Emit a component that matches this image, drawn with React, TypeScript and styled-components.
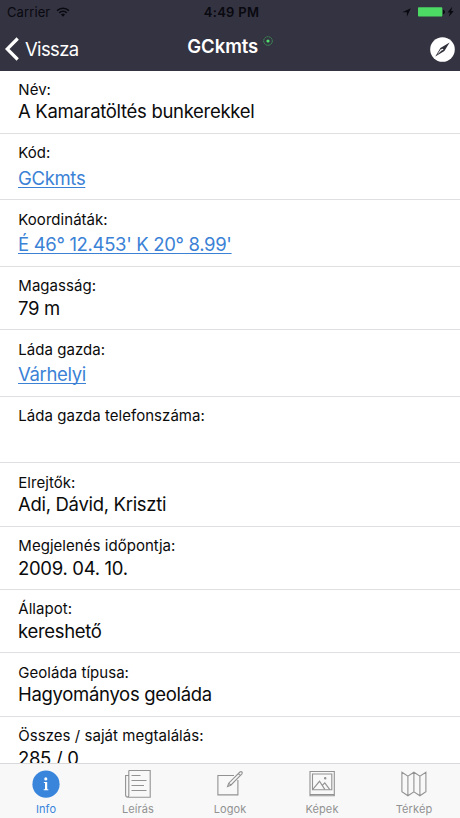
import React from 'react';
import styled, { createGlobalStyle } from 'styled-components';

const GlobalStyle = createGlobalStyle`
  * { box-sizing: border-box; }
  body { margin: 0; background: #fff; }
`;

const Screen = styled.div`
  width: 460px;
  height: 818px;
  display: flex;
  flex-direction: column;
  overflow: hidden;
  background: #fff;
  font-family: Inter, 'Liberation Sans', sans-serif;
  color: #0b0b0c;
`;

const Header = styled.header`
  flex: none;
  height: 71px;
  background: #343341;
`;

const StatusBar = styled.div`
  height: 24px;
  display: grid;
  grid-template-columns: 1fr auto 1fr;
  align-items: center;
  padding: 0 5px 0 7px;
  font-size: 13px;
  line-height: 24px;
  color: #090910;
`;

const Carrier = styled.div`
  display: flex;
  align-items: center;
  gap: 6px;
  letter-spacing: 0.1px;
`;

const Clock = styled.div`
  font-weight: 600;
  letter-spacing: 0.3px;
  padding-left: 1px;
`;

const Indicators = styled.div`
  display: flex;
  align-items: center;
  justify-content: flex-end;
`;

const NavBar = styled.div`
  height: 46px;
  display: grid;
  grid-template-columns: 1fr auto 1fr;
  align-items: center;
  padding: 0 5px;
  color: #fff;
`;

const BackButton = styled.div`
  display: flex;
  align-items: center;
  gap: 6px;
  padding-top: 3px;
  font-size: 18.5px;
  line-height: 24px;
  letter-spacing: -0.65px;
`;

const Title = styled.div`
  display: flex;
  align-items: flex-start;
  gap: 4.5px;
  font-size: 18.5px;
  line-height: 22px;
  font-weight: 600;
  letter-spacing: -0.05px;
  padding-bottom: 2px;

  svg { margin-top: 1px; }
`;

const CompassButton = styled.div`
  display: flex;
  justify-content: flex-end;
  padding-top: 4px;
`;

const Content = styled.main`
  flex: 1;
  min-height: 0;
  overflow: hidden;
`;

const Row = styled.section<{ $link?: boolean }>`
  height: ${(p) => (p.$link ? 66.55 : 63.35)}px;
  padding: 9px 18px 0;
  border-bottom: 1px solid #dfdfe1;
`;

const RowList = styled.div`
  margin-top: -0.7px;
`;

const Label = styled.div`
  height: 20px;
  line-height: 20px;
  padding: 0.6px 0 0 0.3px;
  font-size: 15px;
  letter-spacing: 0.04px;
  white-space: nowrap;
`;

const Value = styled.div`
  line-height: 24px;
  font-size: 18.5px;
  letter-spacing: -0.31px;
  white-space: nowrap;
`;

const ValueLink = styled.a`
  display: inline-block;
  margin-top: 3px;
  line-height: 24px;
  font-size: 18.5px;
  letter-spacing: -0.33px;
  color: #3b82d6;
  text-decoration: underline;
  text-decoration-thickness: 1px;
  text-underline-offset: 2px;
  text-decoration-skip-ink: none;
  white-space: nowrap;
`;

const TabBar = styled.nav`
  flex: none;
  height: 55px;
  display: grid;
  grid-template-columns: repeat(5, 1fr);
  background: #f8f8f8;
  border-top: 1px solid #d9d9db;
`;

const Tab = styled.div<{ $active?: boolean }>`
  display: flex;
  flex-direction: column;
  align-items: center;
  padding-top: 5px;
  gap: 3px;
  font-size: 11px;
  line-height: 14px;
  letter-spacing: 0.1px;
  color: ${(p) => (p.$active ? '#3985dc' : '#929292')};
  svg { display: block; }
`;

const WifiIcon = () => (
  <svg width="14" height="12" viewBox="0 0 15 12" fill="none" stroke="currentColor" strokeWidth="1.7">
    <path d="M1.2 4.5a9 9 0 0 1 12.6 0M3.5 6.9a5.7 5.7 0 0 1 8 0" />
    <path d="M7.5 11 5.3 8.8a3.1 3.1 0 0 1 4.4 0Z" fill="currentColor" stroke="none" />
  </svg>
);

const LocationIcon = () => (
  <svg width="9" height="9" viewBox="0 0 9 9">
    <path d="M8.8.2 4.9 8.8V4.2H.3Z" fill="currentColor" />
  </svg>
);

const BatteryIcon = () => (
  <svg width="44" height="12" viewBox="0 0 44 12">
    <rect x="7" y="1.2" width="24.3" height="9.4" rx="0.8" fill="#4cd964" />
    <path d="M32 3.8q2 .2 2 2.2T32 8.2Z" fill="currentColor" />
    <path d="m41.2.8-4.6 5.6h2.3l-1.1 4.4 5-5.9h-2.600Z" fill="currentColor" />
  </svg>
);

const ChevronIcon = () => (
  <svg width="14" height="24" viewBox="0 0 14 24" fill="none" stroke="#fff" strokeWidth="3.2">
    <path d="M12.7 1.5 2.2 12l10.5 10.5" />
  </svg>
);

const CacheDot = () => (
  <svg width="10" height="10" viewBox="0 0 10 10">
    <circle cx="5" cy="5" r="4.3" fill="none" stroke="#3e9b5b" strokeWidth="0.9" strokeDasharray="1.8 0.5" />
    <circle cx="5" cy="5" r="1.6" fill="#50e06b" />
  </svg>
);

const CompassIcon = () => (
  <svg width="25" height="25" viewBox="0 0 25 25">
    <circle cx="12.5" cy="12.5" r="12.3" fill="#fff" />
    <path d="M19.6 5.6 14.4 14 5.3 19.5 10.4 11Z" fill="#30303b" />
    <path d="m7 17.800 4.100-6 1.100 1.100Z" fill="#fff" />
    <circle cx="12.5" cy="12.5" r="0.8" fill="#fff" />
  </svg>
);

const InfoIcon = () => (
  <svg width="28" height="30" viewBox="0 0 28 30">
    <circle cx="14" cy="15.2" r="13.6" fill="#3985dc" />
    <circle cx="13.8" cy="9.9" r="1.55" fill="#fff" />
    <path d="M11.9 13h3.3v7.2h1.1v1.1h-4.600v-1.100H13V14h-1.100Z" fill="#fff" />
  </svg>
);

const LineIcon = ({ children }: { children: React.ReactNode }) => (
  <svg width="28" height="30" viewBox="0 0 28 30" fill="none" stroke="#929292" strokeWidth="1.1">
    {children}
  </svg>
);

const DescriptionIcon = () => (
  <LineIcon>
    <path d="M4.8 1.5h21.400v26.700H3.900q-2.300 0-2.300-2.400V6.500h3.200M4.800 1.500v25q0 1.500-1.500 1.500" />
    <path d="M7.5 6.5h9M7.5 11.5h15M7.5 16.5h12.500M7.500 21.500h15" />
  </LineIcon>
);

const LogIcon = () => (
  <LineIcon>
    <path d="M18 6.5H1.9v19.400h20V11" />
    <path d="m11.5 17.6 1.2-3.400L23.900 3q1.200-.8 2 0t0 1.900L14.800 16.200ZM22.300 4.700l2 2M12.700 14.200l2.100 2" />
  </LineIcon>
);

const PhotosIcon = () => (
  <LineIcon>
    <path d="M2 2.5h24.300v24.300H2ZM4.500 5h19.300v15.700H4.500ZM2 25.500h24.300" />
    <path d="m4.8 20.4 6.700-8.100 5.300 8.100M14.300 16.400l2.500-2.500 5 6.700" />
    <circle cx="17.2" cy="9.2" r="0.7" fill="#929292" />
  </LineIcon>
);

const MapIcon = () => (
  <LineIcon>
    <path d="m1.900 3.200 6 4 6-4 6 4 6-4v19.600l-6 4-6-4-6 4-6-4ZM7.900 7.200v19.600M13.900 3.200v19.600M19.900 7.200v19.600" />
  </LineIcon>
);

const rows = [
  { label: 'Név:', value: 'A Kamaratöltés bunkerekkel' },
  { label: 'Kód:', value: 'GCkmts', link: true },
  { label: 'Koordináták:', value: "É 46° 12.453' K 20° 8.99'", link: true },
  { label: 'Magasság:', value: '79 m' },
  { label: 'Láda gazda:', value: 'Várhelyi', link: true },
  { label: 'Láda gazda telefonszáma:', value: '', link: true },
  { label: 'Elrejtők:', value: 'Adi, Dávid, Kriszti' },
  { label: 'Megjelenés időpontja:', value: '2009. 04. 10.' },
  { label: 'Állapot:', value: 'kereshető' },
  { label: 'Geoláda típusa:', value: 'Hagyományos geoláda' },
  { label: 'Összes / saját megtalálás:', value: '285 / 0' },
];

export default function App() {
  return (
    <>
      <GlobalStyle />
      <Screen>
        <Header>
          <StatusBar>
            <Carrier>Carrier <WifiIcon /></Carrier>
            <Clock>4:49 PM</Clock>
            <Indicators><LocationIcon /><BatteryIcon /></Indicators>
          </StatusBar>
          <NavBar>
            <BackButton><ChevronIcon />Vissza</BackButton>
            <Title>GCkmts<CacheDot /></Title>
            <CompassButton><CompassIcon /></CompassButton>
          </NavBar>
        </Header>
        <Content>
          <RowList>
            {rows.map((r) => (
              <Row key={r.label} $link={r.link}>
                <Label>{r.label}</Label>
                {r.link ? <ValueLink>{r.value}</ValueLink> : <Value>{r.value}</Value>}
              </Row>
            ))}
          </RowList>
        </Content>
        <TabBar>
          <Tab $active><InfoIcon />Info</Tab>
          <Tab><DescriptionIcon />Leírás</Tab>
          <Tab><LogIcon />Logok</Tab>
          <Tab><PhotosIcon />Képek</Tab>
          <Tab><MapIcon />Térkép</Tab>
        </TabBar>
      </Screen>
    </>
  );
}
